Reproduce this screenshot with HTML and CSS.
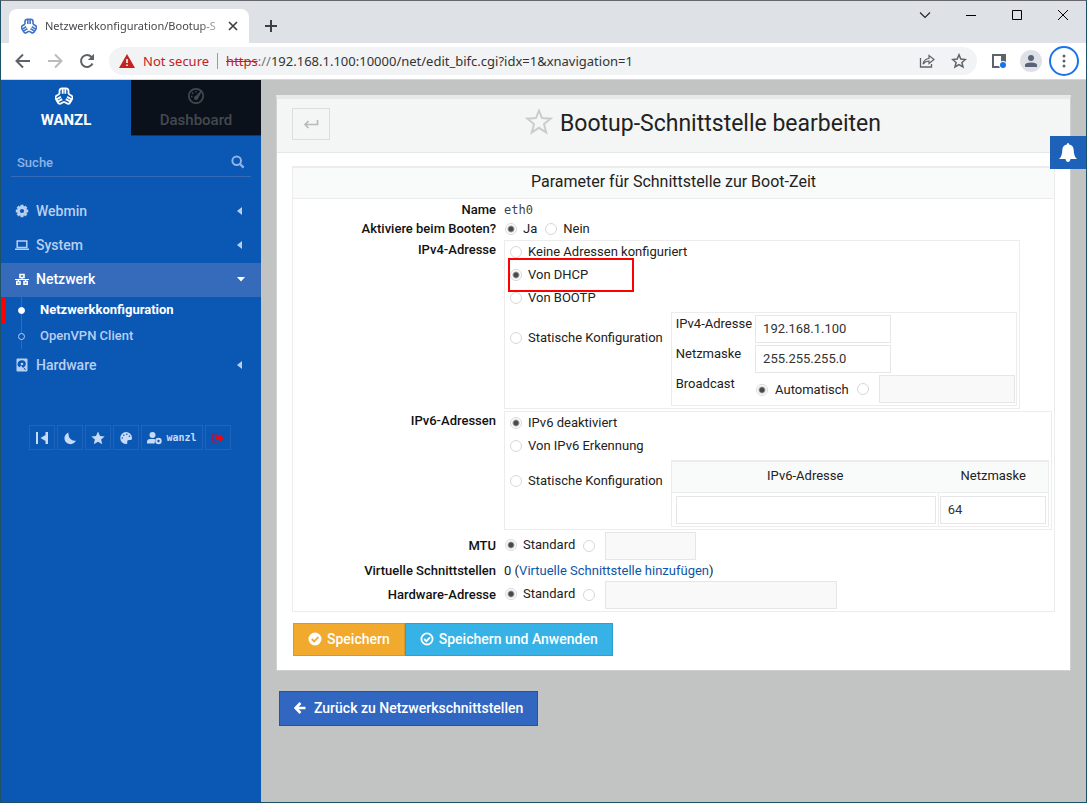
FILE: index.html
```html
<!DOCTYPE html>
<html lang="de">
<head>
<meta charset="utf-8">
<title>Netzwerkkonfiguration/Bootup-Schnittstelle bearbeiten</title>
<link rel="stylesheet" href="styles.css">
</head>
<body>
<svg class="defs" aria-hidden="true">
  <symbol id="logo" viewBox="0 0 18 18">
    <g fill="none" stroke="currentColor" stroke-width="1.8" stroke-linejoin="round">
      <path id="lobe" d="M4.500 7V4Q4.500 1.400 7 1.400H11Q13.500 1.400 13.500 4V7M7.700 1.400V6.800M10.300 1.400V6.800"/>
      <use href="#lobe" transform="rotate(120 9 9.600)"/>
      <use href="#lobe" transform="rotate(240 9 9.600)"/>
    </g>
  </symbol>
  <symbol id="caret" viewBox="0 0 6 8"><path d="M5 0V8L0 4Z" fill="currentColor"/></symbol>
</svg>
<div class="window">
  <header class="tabstrip">
    <div class="tab">
      <svg class="tab-logo" width="16" height="16"><use href="#logo"/></svg>
      <span class="tab-title">Netzwerkkonfiguration/Bootup-S</span>
      <button class="plain" aria-label="Tab schließen"><svg width="10" height="10" viewBox="0 0 10 10"><path d="M1 1L9 9M9 1L1 9" stroke="#3c4043" stroke-width="1.7"/></svg></button>
    </div>
    <button class="plain newtab" aria-label="Neuer Tab"><svg width="12" height="12" viewBox="0 0 12 12"><path d="M6 0V12M0 6H12" stroke="#3c4043" stroke-width="2"/></svg></button>
    <div class="winbtns">
      <button class="plain" aria-label="Tabs suchen"><svg width="12" height="12" viewBox="0 0 12 12"><path d="M1 3.500L6 8.500L11 3.500" fill="none" stroke="#222" stroke-width="1.100"/></svg></button>
      <button class="plain" aria-label="Minimieren"><svg width="12" height="12" viewBox="0 0 12 12"><path d="M1 6.500H11" stroke="#000"/></svg></button>
      <button class="plain" aria-label="Maximieren"><svg width="12" height="12" viewBox="0 0 12 12"><path d="M1.500 1.500H10.500V10.500H1.500Z" fill="none" stroke="#000"/></svg></button>
      <button class="plain" aria-label="Schließen"><svg width="12" height="12" viewBox="0 0 12 12"><path d="M1 1L11 11M11 1L1 11" stroke="#000"/></svg></button>
    </div>
  </header>
  <div class="toolbar">
    <button class="plain" aria-label="Zurück"><svg width="16" height="16" viewBox="0 0 16 16"><path d="M15 8H2M8 1.500L1.500 8L8 14.500" fill="none" stroke="#5f6368" stroke-width="2"/></svg></button>
    <button class="plain" aria-label="Vorwärts"><svg width="16" height="16" viewBox="0 0 16 16"><path d="M1 8H14M8 1.500L14.500 8L8 14.500" fill="none" stroke="#bbb" stroke-width="2"/></svg></button>
    <button class="plain" aria-label="Neu laden"><svg width="16" height="16" viewBox="0 0 16 16"><path d="M13.500 10.500A6 6 0 1 1 12.500 4L13.500 5" fill="none" stroke="#5f6368" stroke-width="2"/><path d="M15 .8V7H8.800Z" fill="#5f6368"/></svg></button>
    <div class="address">
      <svg width="16" height="14" viewBox="0 0 16 14"><path d="M8 0L16 14H0Z" fill="#c5221f"/><path d="M8 5V9M8 10.500V12" stroke="#fff" stroke-width="1.600"/></svg>
      <span class="insecure">Not secure</span>
      <span class="url"><s>https</s><i>://</i>192.168.1.100:10000/net/edit_bifc.cgi?idx=1&amp;xnavigation=1</span>
      <button class="plain" aria-label="Teilen"><svg width="16" height="16" viewBox="0 0 16 16"><path d="M1.500 5V14H12.500V11" fill="none" stroke="#5f6368" stroke-width="1.300"/><path d="M4 11Q5 5.800 10 5.500V2.500L15 6.500L10 10.500V8Q6.500 8 4 11Z" fill="none" stroke="#5f6368" stroke-width="1.200"/></svg></button>
      <button class="plain" aria-label="Lesezeichen"><svg width="16" height="16" viewBox="0 0 16 16"><path d="M8 1.800L9.800 6.100L14.400 6.500L10.900 9.500L12 14L8 11.600L4 14L5.100 9.500L1.600 6.500L6.200 6.100Z" fill="none" stroke="#5f6368" stroke-width="1.500"/></svg></button>
    </div>
    <button class="plain side" aria-label="Seitenleiste"><svg width="16" height="16" viewBox="0 0 16 16"><path d="M1 1H15V15H1Z" fill="#5f6368"/><path d="M3 3H10V13H3Z" fill="#fff"/><circle cx="12" cy="12" r="4" fill="#fff"/><circle cx="12" cy="12" r="3" fill="#1a73e8"/></svg></button>
    <button class="plain" aria-label="Profil"><svg width="22" height="22" viewBox="0 0 22 22"><circle cx="11" cy="11" r="11" fill="#dee1e6"/><circle cx="11" cy="8" r="3" fill="#5a6478"/><path d="M5 17V15Q5 12.400 11 12.400T17 15V17Z" fill="#5a6478"/></svg></button>
    <button class="plain more" aria-label="Menü"><svg width="4" height="14" viewBox="0 0 4 14" fill="#5f6368"><circle cx="2" cy="2" r="1.500"/><circle cx="2" cy="7" r="1.500"/><circle cx="2" cy="12" r="1.500"/></svg></button>
  </div>
  <div class="page">
    <aside class="sidebar">
      <nav class="switch">
        <a class="brand" href="#"><svg width="18" height="18"><use href="#logo"/></svg>WANZL</a>
        <a class="dash" href="#"><svg width="18" height="18" viewBox="0 0 18 18"><circle cx="9" cy="9" r="7.200" fill="none" stroke="currentColor" stroke-width="1.700"/><path d="M8 10.500L15 3L10.500 11.500Z" fill="currentColor" stroke="currentColor"/><circle cx="9" cy="11" r="2" fill="currentColor"/><path d="M4 9.500H5.500M5 5.500L6.200 6.700M9 4V5.500" stroke="currentColor" stroke-width="1.400"/></svg>Dashboard</a>
      </nav>
      <div class="search">
        <input type="text" placeholder="Suche" aria-label="Suche">
        <svg width="14" height="14" viewBox="0 0 14 14"><circle cx="5.700" cy="5.700" r="4.300" fill="none" stroke="currentColor" stroke-width="2"/><path d="M9 9L12.600 12.600" stroke="currentColor" stroke-width="2.400"/></svg>
      </div>
      <nav class="menu">
        <a class="item" href="#"><svg width="14" height="14" viewBox="0 0 14 14"><circle cx="7" cy="7" r="3.500" fill="none" stroke="currentColor" stroke-width="2.800"/><path d="M7 .8V3M7 11V13.200M.8 7H3M11 7H13.200M2.600 2.600L4 4M10 10L11.400 11.400M11.400 2.600L10 4M4 10L2.600 11.400" stroke="currentColor" stroke-width="3"/></svg><span>Webmin</span><svg class="arrow" width="6" height="8"><use href="#caret"/></svg></a>
        <a class="item" href="#"><svg width="14" height="14" viewBox="0 0 14 14"><path d="M2.200 3H11.800V9.500H2.200Z" fill="none" stroke="currentColor" stroke-width="1.500"/><path d="M0 10.500H14V12H0Z" fill="currentColor"/></svg><span>System</span><svg class="arrow" width="6" height="8"><use href="#caret"/></svg></a>
        <a class="item open" href="#"><svg width="14" height="14" viewBox="0 0 14 14"><path d="M5 2.500H9V5.500H5ZM1.800 9.500H5V12.300H1.800ZM9 9.500H12.200V12.300H9Z" fill="none" stroke="currentColor" stroke-width="1.600"/><path d="M7 6V7.500M0 7.500H14M3.400 7.500V9M10.600 7.500V9" stroke="currentColor" stroke-width="1.200"/></svg><span>Netzwerk</span><svg class="arrow" width="8" height="5" viewBox="0 0 8 5"><path d="M0 0H8L4 4.500Z" fill="currentColor"/></svg></a>
        <ul class="sub">
          <li class="active"><a href="#">Netzwerkkonfiguration</a></li>
          <li><a href="#">OpenVPN Client</a></li>
        </ul>
        <a class="item" href="#"><svg width="14" height="14" viewBox="0 0 14 14"><path fill-rule="evenodd" d="M2.500 .5H11.500Q12.500 .5 12.500 1.500V12.500Q12.500 13.500 11.500 13.500H2.500Q1.500 13.500 1.500 12.500V1.500Q1.500 .5 2.500 .5ZM7 2.200A3.800 3.800 0 0 0 4.600 9.300L6 7.500L8 10Q10.800 8.800 10.800 6A3.800 3.800 0 0 0 7 2.200Z" fill="currentColor"/><circle cx="7" cy="6" r="1.300" fill="currentColor"/><path d="M9 10L10.500 12" stroke="#0a57b4"/></svg><span>Hardware</span><svg class="arrow" width="6" height="8"><use href="#caret"/></svg></a>
      </nav>
      <div class="tools">
        <button aria-label="Menü einklappen"><svg width="14" height="14" viewBox="0 0 14 14" fill="currentColor"><path d="M1 1H3V13H1ZM10.500 1H13V13H10.500ZM10.500 4V10L5.500 7Z"/></svg></button>
        <button aria-label="Nachtmodus"><svg width="14" height="14" viewBox="0 0 14 14"><path d="M5.500 1.500A6 6 0 1 0 13 9.500Q10 10.500 7.500 8T5.500 1.500Z" fill="currentColor"/></svg></button>
        <button aria-label="Favoriten"><svg width="14" height="14" viewBox="0 0 14 14"><path d="M7 .5L9 5L13.700 5.400L10.100 8.600L11.200 13.300L7 10.800L2.800 13.300L3.900 8.600L.3 5.400L5 5Z" fill="currentColor"/></svg></button>
        <button aria-label="Farben"><svg width="14" height="14" viewBox="0 0 14 14"><path d="M7 1A6 6 0 1 0 7.500 13Q9 12.500 8.200 10.800Q8 9 10 9H12Q13.200 8.500 13 7A6 6 0 0 0 7 1Z" fill="currentColor"/><g fill="#0a57b4"><circle cx="3.300" cy="7" r=".8"/><circle cx="4.800" cy="4.200" r=".8"/><circle cx="7.800" cy="3.200" r=".8"/><circle cx="10.400" cy="5.200" r=".8"/></g></svg></button>
        <button class="user"><svg width="15" height="14" viewBox="0 0 15 14"><circle cx="5.500" cy="4" r="3" fill="currentColor"/><path d="M0 12.500V11Q0 8 3 8H7Q8 8 8.300 8.400L7.500 12.500Z" fill="currentColor"/><circle cx="11.500" cy="10" r="2.200" fill="none" stroke="currentColor" stroke-width="2"/></svg>wanzl</button>
        <button class="logout" aria-label="Abmelden"><svg width="14" height="14" viewBox="0 0 14 14"><path d="M6 3H1.800V11H6" fill="none" stroke="#b0104a" stroke-width="1.200"/><path d="M4 5.300H8V2.500L12.800 7L8 11.500V8.700H4Z" fill="#f00"/></svg></button>
      </div>
    </aside>
    <main class="content">
      <section class="panel">
        <div class="panel-head">
          <button class="back" aria-label="Zurück"><svg width="16" height="10" viewBox="0 0 16 10"><path d="M14.500 1V5.500H2M5.500 2L2 5.500L5.500 9" fill="none" stroke="#b8bab9" stroke-width="1.700"/></svg></button>
          <h1><svg width="28" height="28" viewBox="0 0 28 28"><path d="M14 1.500L17 9.100L25.500 9.700L19 15.100L21.200 23.500L14 18.800L6.800 23.500L9 15.100L2.500 9.700L11 9.100Z" fill="none" stroke="#ccc" stroke-width="2"/></svg>Bootup-Schnittstelle bearbeiten</h1>
        </div>
        <form class="panel-body">
          <div class="frame">
            <h2>Parameter für Schnittstelle zur Boot-Zeit</h2>
            <div class="row name"><b>Name</b><code>eth0</code></div>
            <div class="row boot"><b>Aktiviere beim Booten?</b>
              <div class="inline"><label><input type="radio" name="boot" checked>Ja</label><label><input type="radio" name="boot">Nein</label></div></div>
            <div class="row"><b>IPv4-Adresse</b>
              <div class="box">
                <label class="opt"><input type="radio" name="v4">Keine Adressen konfiguriert</label>
                <div class="mark"><label class="opt"><input type="radio" name="v4" checked>Von DHCP</label></div>
                <label class="opt"><input type="radio" name="v4">Von BOOTP</label>
                <div class="static">
                  <label class="opt tall"><input type="radio" name="v4">Statische Konfiguration</label>
                  <div class="grid4">
                    <label for="ip">IPv4-Adresse</label><input id="ip" class="field ip" type="text" value="192.168.1.100">
                    <label for="mask">Netzmaske</label><input id="mask" class="field ip" type="text" value="255.255.255.0">
                    <label for="bc">Broadcast</label>
                    <div class="inline low"><label><input type="radio" name="bc" checked>Automatisch</label><input type="radio" name="bc" aria-label="Broadcast manuell"><input id="bc" class="field ip" type="text" disabled></div>
                  </div>
                </div>
              </div></div>
            <div class="row"><b>IPv6-Adressen</b>
              <div class="box">
                <label class="opt"><input type="radio" name="v6" checked>IPv6 deaktiviert</label>
                <label class="opt"><input type="radio" name="v6">Von IPv6 Erkennung</label>
                <div class="static">
                  <label class="opt mid"><input type="radio" name="v6">Statische Konfiguration</label>
                  <table>
                    <thead><tr><th>IPv6-Adresse</th><th>Netzmaske</th></tr></thead>
                    <tbody><tr><td class="first"><input class="field v6" type="text" aria-label="IPv6-Adresse"></td><td><input class="field v6mask" type="text" value="64" aria-label="Netzmaske"></td></tr></tbody>
                  </table>
                </div>
              </div></div>
            <div class="row single"><b>MTU</b>
              <div class="inline"><label><input type="radio" name="mtu" checked>Standard</label><input type="radio" name="mtu" aria-label="MTU manuell"><input class="field mtu" type="text" aria-label="MTU" disabled></div></div>
            <div class="row name"><b>Virtuelle Schnittstellen</b><span>0 (<a href="#">Virtuelle Schnittstelle hinzufügen</a>)</span></div>
            <div class="row single"><b>Hardware-Adresse</b>
              <div class="inline"><label><input type="radio" name="hw" checked>Standard</label><input type="radio" name="hw" aria-label="Hardware-Adresse manuell"><input class="field hw" type="text" aria-label="Hardware-Adresse" disabled></div></div>
          </div>
          <div class="actions">
            <button class="btn save" type="button"><svg width="14" height="14" viewBox="0 0 14 14"><circle cx="7" cy="7" r="6.500" fill="#fff"/><path d="M3.800 7L6.200 9.400L10.400 5" fill="none" stroke="#f1a92e" stroke-width="1.800"/></svg>Speichern</button>
            <button class="btn apply" type="button"><svg width="14" height="14" viewBox="0 0 14 14"><circle cx="7" cy="7" r="5.600" fill="none" stroke="#fff" stroke-width="1.800"/><path d="M4.200 7L6.400 9.200L10 5.400" fill="none" stroke="#fff" stroke-width="1.800"/></svg>Speichern und Anwenden</button>
          </div>
        </form>
      </section>
      <button class="btn return"><svg width="12" height="12" viewBox="0 0 12 12"><path d="M11.500 6H2M6.500 1L1.500 6L6.500 11" fill="none" stroke="#fff" stroke-width="2.600"/></svg>Zurück zu Netzwerkschnittstellen</button>
      <button class="bell" aria-label="Benachrichtigungen"><svg width="18" height="20" viewBox="0 0 18 20"><path d="M9 0Q10.200 0 10.200 1.600Q14.800 2.600 14.800 8Q14.800 13 18 16H0Q3.200 13 3.200 8Q3.200 2.600 7.800 1.600Q7.800 0 9 0ZM6.500 16H11.500Q11 19 9 19T6.500 16Z" fill="#fff"/></svg></button>
    </main>
  </div>
</div>
</body>
</html>
```
FILE: styles.css
```css
*, *::before, *::after { box-sizing: border-box; }
body { margin: 0; font: 13px/20px Roboto, sans-serif; color: #222; }
a { color: #0d55a8; text-decoration: none; }
svg { display: block; flex: none; }
.defs { position: absolute; width: 0; height: 0; }
button { font: inherit; cursor: pointer; }
.plain { border: 0; background: none; padding: 0; display: grid; place-items: center; }
.window { min-height: 100vh; display: flex; flex-direction: column; border: 1px solid #1d5266; border-top-color: #66686d; }

.tabstrip { height: 42px; background: #dee1e6; display: flex; align-items: flex-end; padding-left: 8px; }
.tab { width: 240px; height: 34px; background: #fff; border-radius: 8px 8px 0 0; display: flex; align-items: center; gap: 8px; padding: 0 11px 0 12px; font: 11px/16px "Noto Sans", sans-serif; color: #45484c; }
.tab-logo { color: #3f74c8; }
.tab-title { flex: 1; white-space: nowrap; mask-image: linear-gradient(to right, #000 88%, rgb(0 0 0 / 30%)); }
.newtab { width: 28px; height: 34px; margin-left: 8px; }
.winbtns { margin-left: auto; align-self: flex-start; display: flex; }
.winbtns .plain { width: 46px; height: 28px; }

.toolbar { height: 37px; background: #fff; border-bottom: 1px solid #d5d7d9; display: flex; align-items: center; gap: 16px; padding: 0 7px 0 14px; }
.address { flex: 1; height: 28px; margin-left: -2px; border-radius: 14px; background: #f1f3f4; display: flex; align-items: center; gap: 8px; padding: 0 10px; font: 13px/20px "Noto Sans", sans-serif; color: #333; }
.address .plain { margin-left: 8px; }
.insecure { color: #c5221f; border-right: 1px solid #9a9c9f; padding-right: 8px; line-height: 16px; }
.url { flex: 1; white-space: nowrap; overflow: hidden; }
.url s { color: #c5221f; }
.url i { font-style: normal; color: #70757a; }
.side { margin: 0 -3px 0 -2px; }
.more { width: 30px; height: 30px; margin-left: -9px; border: 2px solid #1a73e8; border-radius: 50%; }

.page { flex: 1; display: flex; background: #c2c4c3; }
.sidebar { width: 260px; flex: none; background: #0a57b4; color: #b9cff0; }
.switch { display: grid; grid-template-columns: 1fr 1fr; }
.switch a { height: 56px; display: flex; flex-direction: column; align-items: center; gap: 5px; padding-top: 7px; font-size: 15px; line-height: 21px; color: #fff; font-weight: 700; }
.switch .brand svg { margin-right: 4px; }
.switch .dash { background: #0a111b; border-bottom: 1px solid #2a3340; color: #45494f; font-weight: 500; }
.search { margin: 12px 10px 17px; height: 29px; display: flex; align-items: center; padding: 0 6px; border-bottom: 1px solid #346bb9; color: #8eb4e6; }
.search input { flex: 1; min-width: 0; border: 0; padding: 2px 0 0; background: none; color: #fff; font: 500 13px/20px Roboto, sans-serif; }
.search input::placeholder { color: #8eb4e6; }
.menu { padding-top: 1px; }
.item { height: 34px; display: flex; align-items: center; gap: 7px; padding: 0 18px 2px 14px; color: #b9cff0; font-size: 14px; font-weight: 500; }
.item span { flex: 1; }
.item.open { background: #366abb; color: #fff; padding-right: 16px; }
.sub { list-style: none; margin: 0; padding: 0; }
.sub li { height: 26px; padding-left: 39px; line-height: 26px; position: relative; font-weight: 500; background: linear-gradient(#346bb9, #346bb9) 20px 0 / 1px 100% no-repeat; }
.sub li a { color: #b9cff0; }
.sub li::before { content: ""; position: absolute; left: 17px; top: 10px; width: 7px; height: 7px; border: 1px solid #b9cff0; border-radius: 50%; background: #0a57b4; }
.sub .active { box-shadow: inset 4px 0 #f00; font-weight: 700; }
.sub .active a { color: #fff; }
.sub .active::before { background: #fff; border-color: #fff; }
.tools { margin: 42px 0 0 28px; display: flex; gap: 2px; }
.tools button { width: 26px; height: 25px; padding: 0; border: 1px solid #1f63bb; background: none; color: #c8daf6; display: flex; align-items: center; justify-content: center; gap: 4px; font: 700 10px/14px "DejaVu Sans Mono", monospace; }
.tools .user { width: 62px; }

.content { flex: 1; min-width: 0; padding: 15px 15px 20px; position: relative; }
.panel { background: #fff; border: 1px solid #cfd1d0; border-top: 4px solid #e8e8e8; }
.panel-head { height: 54px; background: #f4f6f5; border-bottom: 1px solid #e6e8e7; display: grid; grid-template-columns: 38px 1fr; align-items: center; padding: 0 0 3px 15px; }
.back { height: 32px; border: 1px solid #dcdedd; background: none; padding: 0; display: grid; place-items: center; }
h1 { margin: 0; padding-left: 6px; font-size: 23px; line-height: 30px; font-weight: 400; display: flex; justify-content: center; gap: 7px; }
.panel-body { padding: 13px 15px 14px; }
.frame { border: 1px solid #ececec; border-top-width: 2px; padding-bottom: 2px; }
h2 { margin: 0; padding-bottom: 2px; font-size: 16px; line-height: 28px; font-weight: 400; text-align: center; background: #f9fafa; border-bottom: 1px solid #ececec; }
.row { display: grid; grid-template-columns: 203px 1fr; column-gap: 8px; margin-bottom: 2px; }
.row b { font-weight: 500; text-align: right; color: #111; }
.row.name, .row.single { align-items: center; margin: 0; }
.row.name { height: 21px; }
.row.boot { height: 20px; margin-bottom: 0; line-height: 18px; }
.row.single { min-height: 28px; }
code { font: 12px/20px "DejaVu Sans Mono", monospace; color: #444; }
.inline { display: flex; align-items: center; gap: 8px; padding-left: 1px; }
.inline label { display: flex; align-items: center; gap: 6px; line-height: 18px; padding-bottom: 2px; }
.low label { padding: 2px 0 0; gap: 7px; }
.low { margin-right: -1px; }
.inline .field { margin-left: 2px; }
input[type=radio] { appearance: none; flex: none; width: 12px; height: 12px; margin: 0; border: 1px solid #d8d8d8; border-radius: 50%; background: #fff; }
input[type=radio]:checked { background: radial-gradient(circle, #484848 0 2px, #fff 4px); }
.box { justify-self: start; border: 1px solid #ececec; padding: 0 2px 2px 5px; }
.opt { display: flex; align-items: center; gap: 6px; height: 23px; line-height: 18px; padding-bottom: 2px; }
.mark { position: relative; }
.mark::after { content: ""; position: absolute; left: -2px; top: -6px; width: 126px; height: 34px; border: 2px solid #f00; pointer-events: none; }
.static { display: flex; align-items: flex-start; gap: 8px; padding-top: 2px; }
.tall { height: 54px; }
.mid { height: 44px; }
.grid4 { display: grid; grid-template-columns: auto auto; column-gap: 3px; row-gap: 2px; justify-items: start; line-height: 18px; border: 1px solid #ececec; padding: 2px 2px 2px 4px; }
.field { height: 28px; margin: 0; padding: 0 7px 1px; border: 1px solid #e6e6e6; background: #fff; color: #333; font: 13px/20px Roboto, sans-serif; }
.field:disabled { background: #f9f9f9; }
.ip { width: 136px; }
.mtu { width: 91px; }
.hw { width: 232px; }
.v6 { width: 260px; }
.v6mask { width: 106px; }
table { border-collapse: separate; border-spacing: 0; border: 1px solid #ececec; }
th { height: 32px; padding: 0 0 2px; font-weight: 400; background: #f9fafa; border-top: 1px solid #ececec; border-bottom: 1px solid #ececec; }
td { height: 33px; padding: 2px 2px 2px 1px; vertical-align: middle; line-height: 0; }
td.first { padding-left: 4px; padding-right: 2px; border-right: 1px solid #ececec; }
.actions { display: flex; margin: 11px 0 0 1px; }
.btn { display: flex; align-items: center; height: 33px; padding: 0 14px 1px; border: 1px solid; color: #fff; font-size: 14px; font-weight: 500; gap: 5px; }
.save { background: #f1a92e; border-color: #d9982a; }
.apply { background: #37b2e6; border-color: #319fce; }
.return { height: 35px; margin: 20px 0 0 3px; background: #3167c0; border-color: #24549f; gap: 8px; }
.bell { position: absolute; right: 0; top: 56px; width: 36px; height: 33px; border: 0; padding: 0; background: #1d62b8; display: grid; place-items: center; }
```
